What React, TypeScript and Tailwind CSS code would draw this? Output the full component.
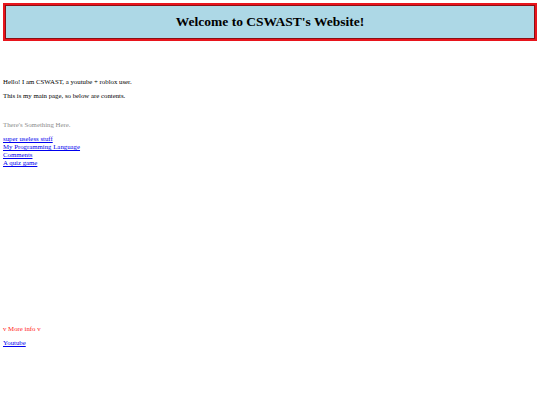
export default function App() {
  return (
    <div
      className="w-[540px] h-[405px] bg-white px-[3px] pt-[3px] text-[6.8px] leading-[8px] text-black"
      style={{ fontFamily: '"Liberation Serif", "Times New Roman", serif' }}
    >
      {/* Header */}
      <div className="border-[2px] border-[#e8141c]">
        <div className="border border-[#8a0f14] bg-[#add8e6] h-[34px] flex items-center justify-center">
          <h1 className="text-[13.5px] leading-[16px] font-bold">Welcome to CSWAST's Website!</h1>
        </div>
      </div>

      <p className="mt-[37px]">Hello! I am CSWAST, a youtube + roblox user.</p>
      <p className="mt-[6px]">This is my main page, so below are contents.</p>

      <p className="mt-[21px] text-[#8c8c8c]">There's Something Here.</p>

      <div className="mt-[6px] flex flex-col items-start">
        <a href="#" className="text-[#0000ee] underline">super useless stuff</a>
        <a href="#" className="text-[#0000ee] underline">My Programming Language</a>
        <a href="#" className="text-[#0000ee] underline">Comments</a>
        <a href="#" className="text-[#0000ee] underline">A quiz game</a>
      </div>

      <p className="mt-[158px] text-[#ff2020]">v More info v</p>
      <p className="mt-[6px]">
        <a href="#" className="text-[#0000ee] underline">Youtube</a>
      </p>
    </div>
  );
}
